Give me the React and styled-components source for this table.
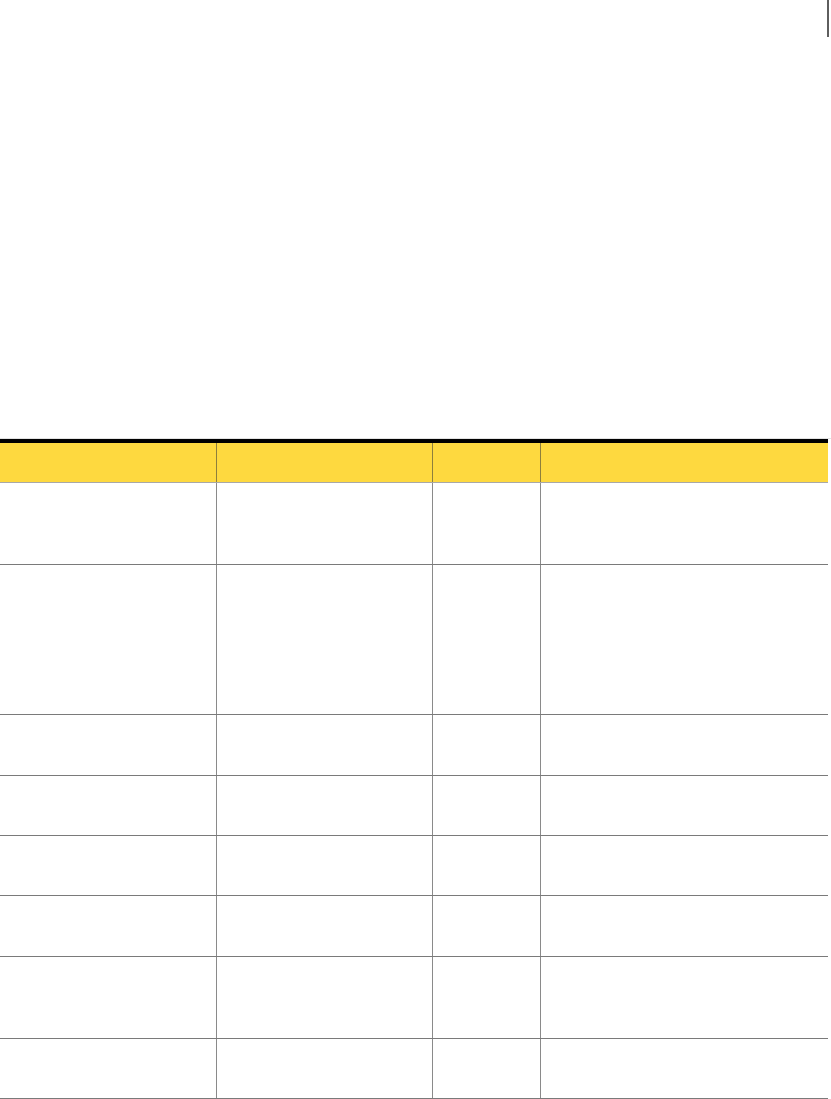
import React from 'react';
import styled, { createGlobalStyle } from 'styled-components';

const COLUMNS = [216, 216, 108, 288];
const ROW_HEIGHTS = [82, 150, 61, 60, 60, 61, 82, 60];

const GlobalStyle = createGlobalStyle`
  html, body {
    margin: 0;
    padding: 0;
    background: #ffffff;
    font-family: "Liberation Sans", Arial, sans-serif;
  }
`;

const Page = styled.div`
  width: 831px;
  display: flex;
  flex-direction: column;
`;

const TopArea = styled.div`
  height: 438px;
  display: flex;
  justify-content: flex-end;
  border-bottom: 1px solid #e2e2e2;
`;

const ChangeBar = styled.div`
  width: 2px;
  height: 37px;
  margin-right: 2px;
  background: #5e5e5e;
`;

const Table = styled.div`
  width: 828px;
  border-top: 4px solid #000000;
`;

const Row = styled.div`
  display: grid;
  grid-template-columns: ${COLUMNS.map(w => `${w}px`).join(' ')};
  height: ${p => p.height}px;
  border-bottom: 1px solid ${p => (p.header ? '#a8a8a8' : '#7a7a7a')};
  background: ${p => (p.header ? '#fed93f' : '#ffffff')};
  box-sizing: border-box;
`;

const Cell = styled.div`
  border-left: ${p => (p.first ? 'none' : `1px solid ${p.header ? '#8e7f3c' : '#8a8a8a'}`)};
  font-size: 13px;
  color: #000;
`;

const App = () => (
  <>
    <GlobalStyle />
    <Page>
      <TopArea>
        <ChangeBar />
      </TopArea>
      <Table>
        <Row header height={40}>
          {COLUMNS.map((_, i) => (
            <Cell key={i} header first={i === 0} />
          ))}
        </Row>
        {ROW_HEIGHTS.map((h, r) => (
          <Row key={r} height={h}>
            {COLUMNS.map((_, i) => (
              <Cell key={i} first={i === 0} />
            ))}
          </Row>
        ))}
      </Table>
    </Page>
  </>
);

export default App;
